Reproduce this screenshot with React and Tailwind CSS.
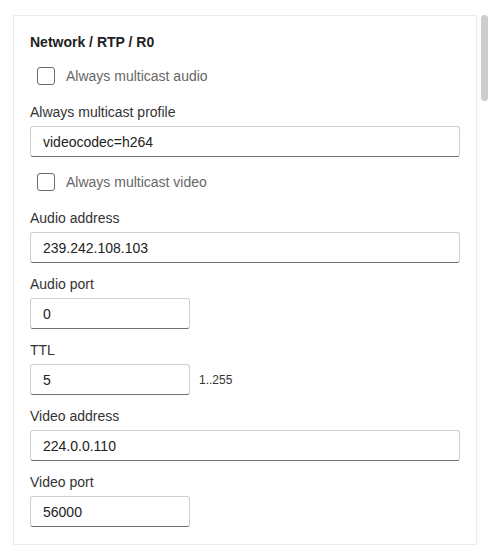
import React from 'react';

const Check = ({ label }) => (
  <div className="flex items-center pl-[7px] h-[18px]">
    <div className="w-[18px] h-[18px] rounded-[3px] border border-[#6b6b6b] bg-white" />
    <span className="ml-[11px] text-[14px] leading-[20px] text-[#666]">{label}</span>
  </div>
);

const Field = ({ label, value, short, hint, className = '' }) => (
  <div className={className}>
    <div className="text-[14px] leading-[20px] text-[#333] mb-[4px]">{label}</div>
    <div className="flex items-center">
      <input
        readOnly
        value={value}
        className={`${short ? 'w-[160px]' : 'w-full'} h-[31px] px-[12px] rounded-[3px] border border-[#cfcfcf] border-b-[#6f6f6f] text-[14px] text-[#222] bg-white outline-none`}
      />
      {hint && <span className="ml-[9px] text-[12px] text-[#333]">{hint}</span>}
    </div>
  </div>
);

export default function App() {
  return (
    <div className="w-[504px] h-[553px] bg-white flex font-['Liberation_Sans',Arial,sans-serif]">
      <div className="ml-[13px] mt-[15px] w-[464px] h-[530px] border border-[#ececec] pl-[16px] pr-[16px] pt-[16px] pb-[16px]">
        <div className="text-[14px] leading-[20px] font-bold text-[#222]">Network / RTP / R0</div>
        <div className="mt-[15px]">
          <Check label="Always multicast audio" />
        </div>
        <Field className="mt-[17px]" label="Always multicast profile" value="videocodec=h264" />
        <div className="mt-[16px]">
          <Check label="Always multicast video" />
        </div>
        <Field className="mt-[17px]" label="Audio address" value="239.242.108.103" />
        <Field className="mt-[11px]" label="Audio port" value="0" short />
        <Field className="mt-[11px]" label="TTL" value="5" short hint="1..255" />
        <Field className="mt-[11px]" label="Video address" value="224.0.0.110" />
        <Field className="mt-[11px]" label="Video port" value="56000" short />
      </div>
      <div className="ml-[4px] mt-[15px] w-[7px] h-[86px] rounded-full bg-[#cdcdcd]" />
    </div>
  );
}
